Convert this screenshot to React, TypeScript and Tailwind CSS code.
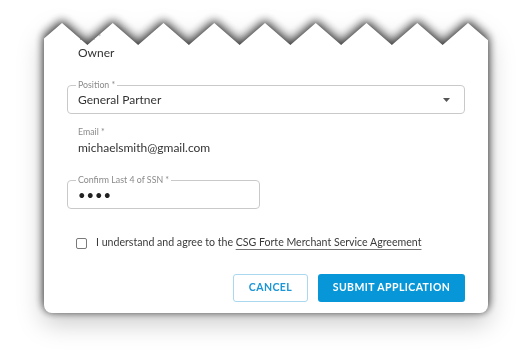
import React from 'react';

const CARD_WIDTH = 444;
const CARD_HEIGHT = 290;
const TOOTH_HALF = 25.375;
const TOOTH_DEPTH = 22;

// torn top edge: zigzag polygon, valleys start just off the left edge
function tornEdge() {
  const points: string[] = [];
  let lastX = 0;
  for (let i = 0; i < 20; i++) {
    const x = -7.375 + i * TOOTH_HALF;
    const y = i % 2 === 0 ? TOOTH_DEPTH : 0;
    points.push(`${x}px ${y}px`);
    lastX = x;
  }
  points.push(`${lastX}px ${CARD_HEIGHT + 10}px`);
  points.push(`-7.375px ${CARD_HEIGHT + 10}px`);
  return `polygon(${points.join(', ')})`;
}

function OutlinedField({ label, className, children }: { label: string; className?: string; children: React.ReactNode }) {
  return (
    <div className={`relative flex h-[29px] items-center rounded-[4px] border border-[#c9c9c9] pl-[10px] ${className ?? ''}`}>
      <span className="absolute -top-[6px] left-[8px] bg-white px-[2px] text-[8.8px] leading-[10px] text-[#8a8a8a]">
        {label}
      </span>
      {children}
    </div>
  );
}

function StaticField({ label, value, className }: { label: string; value: string; className?: string }) {
  return (
    <div className={`pl-[11px] ${className ?? ''}`}>
      <p className="text-[8.8px] leading-[10px] text-[#8a8a8a]">{label}</p>
      <p className="mt-[3px] text-[12px] leading-[16px] text-[#333]">{value}</p>
    </div>
  );
}

export default function App() {
  return (
    <div className="min-h-[359px] w-[532px] bg-white pt-[23px] pl-[44px] font-['Lato',sans-serif]">
      <div className="w-[444px] [filter:drop-shadow(0_-3px_5px_rgba(0,0,0,0.6))_drop-shadow(0_0_3px_rgba(0,0,0,0.35))_drop-shadow(0_10px_12px_rgba(0,0,0,0.2))]">
        <div
          className="flex h-[290px] flex-col rounded-b-[8px] bg-white px-[23px] pt-[9px]"
          style={{ clipPath: tornEdge(), width: CARD_WIDTH }}
        >
          <StaticField label="Title *" value="Owner" />

          <OutlinedField label="Position *" className="mt-[24px] w-full pr-[14px]">
            <span className="flex-1 text-[12px] leading-[16px] text-[#333]">General Partner</span>
            <svg width="7" height="4" viewBox="0 0 7 4" className="mt-[1px]">
              <path d="M0 0h7L3.5 4z" fill="#555" />
            </svg>
          </OutlinedField>

          <StaticField label="Email *" value="michaelsmith@gmail.com" className="mt-[13px]" />

          <OutlinedField label="Confirm Last 4 of SSN *" className="mt-[24px] w-[193px]">
            <span className="text-[13px] leading-[16px] tracking-[1px] text-[#222]">••••</span>
          </OutlinedField>

          <label className="mt-[26px] flex h-[16px] items-center gap-[9px] pl-[9px] text-[10.6px] text-[#3a3a3a]">
            <span className="h-[11px] w-[11px] rounded-[2px] border-[1.5px] border-[#7a7a7a]" />
            <span>
              I understand and agree to the{' '}
              <a className="underline decoration-[#777] underline-offset-[3px]">CSG Forte Merchant Service Agreement</a>
            </span>
          </label>

          <div className="mt-[23px] flex justify-end gap-[10px]">
            <button className="h-[28px] w-[75px] rounded-[3px] border border-[#a9d8f0] text-[10.5px] font-bold tracking-[0.04em] text-[#1b96d6]">
              CANCEL
            </button>
            <button className="h-[28px] w-[147px] rounded-[3px] bg-[#0797d8] text-[10.5px] font-bold tracking-[0.04em] text-white">
              SUBMIT APPLICATION
            </button>
          </div>
        </div>
      </div>
    </div>
  );
}
